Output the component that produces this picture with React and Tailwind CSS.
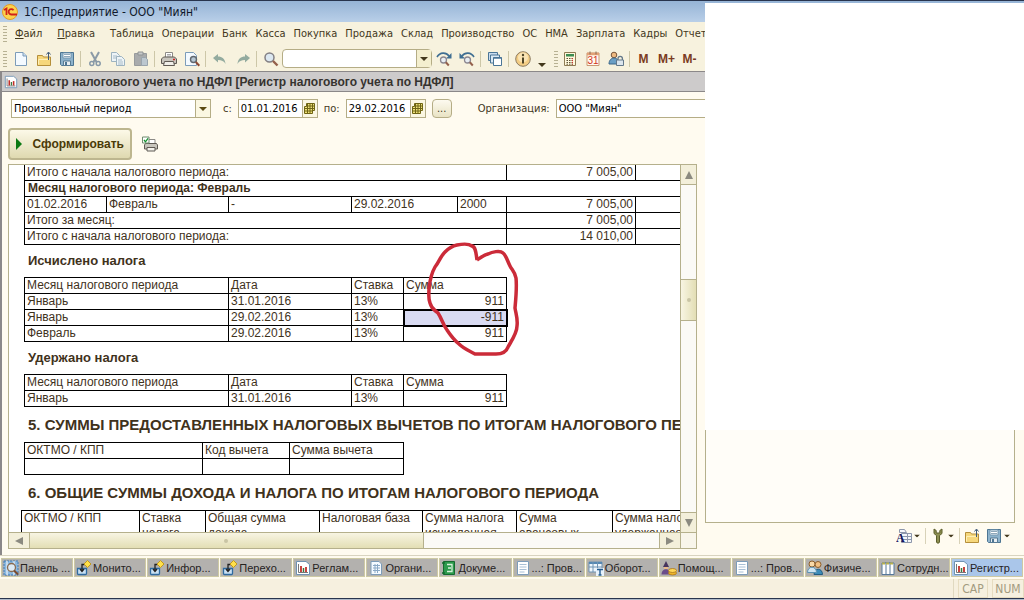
import { useState } from 'react';

const ICONS = {
  blank: (
    <>
      <path d="M2.500 1.500h7.500l3.500 3.500v9.500h-11z" fill="#f4faff" stroke="#7c9cb9" />
      <path d="M10 1.500V5h3.500" fill="#c9dcee" stroke="#7c9cb9" />
    </>
  ),
  open: (
    <>
      <path d="M1.500 4.500h5l1 1.500h7v8.500h-13z" fill="#f6d77c" stroke="#b58f3a" />
      <path d="M2.500 13.500V8.500h11" fill="none" stroke="#fff0b5" />
      <path d="M12.500 9V1.500M10.500 3.500l2-2.500 2 2.500" fill="none" stroke="#3f5a78" />
    </>
  ),
  save: (
    <>
      <path d="M1.500 1.500h13v13h-12l-1-1z" fill="#8eb3cc" stroke="#4d7592" />
      <path d="M4 2h8v5H4z" fill="#fff" stroke="#7397b0" />
      <path d="M5 3.500h6M5 5.500h6" stroke="#8fa8ba" />
      <path d="M4.500 10h7v4.500h-7z" fill="#e7eef3" stroke="#587b94" />
      <path d="M6 11h2v3H6z" fill="#4d7592" />
    </>
  ),
  cut: (
    <>
      <path d="M4 1l5.500 10M12 1L6.500 11" fill="none" stroke="#8b9aa6" strokeWidth="2" />
      <circle cx="4.800" cy="12.500" r="2" fill="none" stroke="#8799a8" strokeWidth="1.500" />
      <circle cx="11.200" cy="12.500" r="2" fill="none" stroke="#8799a8" strokeWidth="1.500" />
    </>
  ),
  copy: (
    <>
      <path d="M1.500 1.500h5l3 3v6h-8z" fill="#eef4f7" stroke="#9db3c0" />
      <path d="M3 5h4M3 7h4" stroke="#a9bcc8" />
      <path d="M6.500 5.500h5l3 3v6h-8z" fill="#eef4f7" stroke="#9db3c0" />
      <path d="M8 9h4M8 11h5M8 13h5" stroke="#a9bcc8" />
    </>
  ),
  paste: (
    <>
      <path d="M1.500 2.500h12v12h-12z" fill="#a9abac" stroke="#989b9c" />
      <path d="M5 1h5v3H5z" fill="#c8caca" stroke="#8f9394" />
      <path d="M8.500 6.500h4l2 2v6h-6z" fill="#bcc7cf" stroke="#9aa5ad" />
    </>
  ),
  print: (
    <>
      <path d="M4.500 1.500h7v5h-7z" fill="#fff" stroke="#8c8a86" />
      <path d="M6 3.500h4M6 5h4" stroke="#aaa" />
      <path d="M2.500 6h11l2 2v4.500H.500V8z" fill="#c8c5bd" stroke="#5f5a54" />
      <path d="M3.500 10.500h9l1 4h-11z" fill="#f0eee8" stroke="#5f5a54" />
      <path d="M12 8.500h2" stroke="#c22" strokeWidth="1.500" />
    </>
  ),
  preview: (
    <>
      <path d="M1.500 1.500h8l3 3v10h-11z" fill="#f4faff" stroke="#7c9cb9" />
      <circle cx="9.500" cy="8.500" r="3" fill="#b5c6d3" stroke="#60676e" strokeWidth="1.400" />
      <path d="M11.800 11l3.500 3.700" stroke="#8d4a33" strokeWidth="2" />
    </>
  ),
  undo: <path d="M1 7l5-4v2.500c4 0 7 2 7.500 7.500C12 10 9.500 9 6 9v2.500z" fill="#93ab9f" />,
  redo: <path d="M15 7l-5-4v2.500c-4 0-7 2-7.500 7.500C4 10 6.500 9 10 9v2.500z" fill="#93ab9f" />,
  find: (
    <>
      <circle cx="6.500" cy="6.500" r="4.500" fill="#dce8f1" stroke="#827f83" strokeWidth="1.500" />
      <path d="M10 10l4.500 4.500" stroke="#94604c" strokeWidth="2.400" />
    </>
  ),
  findNext: (
    <>
      <path d="M1 6c3-5 9-5 12-1" fill="none" stroke="#3f6e92" strokeWidth="1.600" />
      <path d="M15.500 2v5.500H10z" fill="#3f6e92" />
      <circle cx="7.500" cy="9" r="3" fill="#e8eef3" stroke="#8b8790" strokeWidth="1.300" />
      <path d="M9.800 11.300l3 3.200" stroke="#94604c" strokeWidth="2" />
    </>
  ),
  findPrev: (
    <>
      <path d="M15 6c-3-5-9-5-12-1" fill="none" stroke="#3f6e92" strokeWidth="1.600" />
      <path d="M.500 2v5.500H6z" fill="#3f6e92" />
      <circle cx="8.500" cy="9" r="3" fill="#e8eef3" stroke="#8b8790" strokeWidth="1.300" />
      <path d="M10.800 11.300l3 3.200" stroke="#94604c" strokeWidth="2" />
    </>
  ),
  windows: (
    <>
      <path d="M1.500 1.500h9v8h-9z" fill="#c9dcee" stroke="#4a7597" />
      <path d="M3.500 4h9v8h-9z" fill="#dceaf5" stroke="#4a7597" />
      <path d="M6.500 6.500h8v8h-8z" fill="#fff" stroke="#4a7597" />
      <path d="M6.500 7h8" stroke="#4a7597" strokeWidth="1.500" />
    </>
  ),
  info: (
    <>
      <circle cx="8" cy="8" r="7.300" fill="#f3cd84" stroke="#8d7c62" />
      <circle cx="8" cy="6.500" r="5" fill="#fae4b4" />
      <circle cx="8" cy="4" r="1.200" fill="#4f4528" />
      <path d="M8 6.500v6" stroke="#4f4528" strokeWidth="2" />
    </>
  ),
  calc: (
    <>
      <path d="M2.500 1.500h11v13h-11z" fill="#fff8dc" stroke="#8d7b53" />
      <path d="M4 3h8v2.500H4z" fill="#3c8d51" />
      <path d="M4.500 7.500h7M4.500 9.500h7M4.500 11.500h7M4.500 13.200h7" stroke="#5c5235" strokeDasharray="1.500 1" />
      <path d="M10.500 7v6.500" stroke="#c33" strokeDasharray="1.200 .8" />
    </>
  ),
  calendar: (
    <>
      <path d="M2 2h12v12.500H2z" fill="#fffaf0" stroke="#c99874" />
      <path d="M2 3h12" stroke="#e2a177" strokeWidth="2.500" />
      <path d="M5 .5v3M11 .5v3" stroke="#8c6a50" />
      <text x="8" y="13" textAnchor="middle" fontSize="10" fontFamily="Liberation Sans, sans-serif" fill="#d2311c">31</text>
    </>
  ),
  userLock: (
    <>
      <circle cx="6" cy="4" r="2.800" fill="#eeb980" stroke="#775438" />
      <path d="M1 13c0-8 10-8 10 0z" fill="#6b9fc5" stroke="#3c6788" />
      <path d="M10 9V7.500a2.200 2.200 0 0 1 4.400 0V9" fill="none" stroke="#63788a" strokeWidth="1.300" />
      <path d="M8.500 9h7v5.500h-7z" fill="#dce6ee" stroke="#63788a" />
    </>
  ),
  chart: (
    <>
      <path d="M1.500 1.500h9.500l3.500 3v10h-13z" fill="#fff" stroke="#6f93b3" />
      <path d="M3.500 4v8.500H13" fill="none" stroke="#777" />
      <path d="M6 12V6" stroke="#c22f2a" strokeWidth="1.800" />
      <path d="M8.500 12V8" stroke="#3a7a44" strokeWidth="1.500" />
      <path d="M11 12V7" stroke="#c22f2a" strokeWidth="1.800" />
    </>
  ),
  printCheck: (
    <>
      <path d="M6 3.500h7v5H6z" fill="#fff" stroke="#8c8a86" />
      <path d="M3.500 7.500h11l1 1.500v4H2.500V9z" fill="#c8c5bd" stroke="#5f5a54" />
      <path d="M5 11.500h8v3.500H5z" fill="#f4f2ec" stroke="#5f5a54" />
      <path d="M.5 1h6.500v6H.5z" fill="#fff" stroke="#6f8b6f" />
      <path d="M2 4l1.500 1.800L6 2.300" fill="none" stroke="#12912d" strokeWidth="1.300" />
    </>
  ),
  panel: (
    <>
      <path d="M1 1h14v14H1z" fill="#8cb8df" stroke="#3e7bb5" strokeDasharray="2 1" />
      <path d="M4 1v14M11 1v14" stroke="#fff" />
      <circle cx="8.500" cy="7.500" r="4" fill="#dceaf5" stroke="#8a6b50" strokeWidth="1.300" />
      <path d="M11 10.500l4 4" stroke="#7b4c30" strokeWidth="2.200" />
    </>
  ),
  process: (
    <>
      <path d="M1.500 8.500v5q0 1 1 1h7q1 0 1-1v-5z" fill="#c9e0f3" stroke="#2f6ba0" strokeWidth="1.300" />
      <path d="M8.500 4.500H6v6.500M4 9l2 2.500L8 9" fill="none" stroke="#222" strokeWidth="1.300" />
      <path d="M11.500 .5l3.500 3.500-3.500 3.500L8 4z" fill="#ffe04a" stroke="#c2991e" />
    </>
  ),
  grid: (
    <>
      <path d="M3 1.500h8l2.500 2.500v10.500H3z" fill="#f4faff" stroke="#7c9cb9" />
      <path d="M5 5.500h7M5 8h7M5 10.500h7M7 4v9M9.500 4v9" stroke="#8aa9c6" />
    </>
  ),
  doc: (
    <>
      <path d="M2.500 1.500h11v13h-11z" fill="#fff" stroke="#7c9cb9" />
      <path d="M4.500 4.500h7M4.500 7h7M4.500 9.500h7M4.500 12h5" stroke="#a9c0d6" />
    </>
  ),
  book: (
    <>
      <path d="M2.500 1.500h11v13h-11z" fill="#2c9a4d" stroke="#156b30" />
      <path d="M6 4.500h5v7H6M7 8h3" fill="none" stroke="#d7f2dc" strokeWidth="1.300" />
      <path d="M1 3h3M1 13h3" stroke="#156b30" strokeWidth="1.500" />
    </>
  ),
  balance: (
    <>
      <path d="M1 2h13v10H1z" fill="#eef5fb" stroke="#6f93b3" />
      <path d="M1 3h13" stroke="#5688b3" strokeWidth="2" />
      <path d="M1 7h13M5 2v10M9.500 2v10" stroke="#6f93b3" />
      <path d="M8 8h8v8H8z" fill="#e8f2fb" />
      <path d="M9 9.500h6M12 9.500V15M10.500 15h3" stroke="#245d91" strokeWidth="1.400" />
    </>
  ),
  helper: (
    <>
      <path d="M5 1l3 6H2z" fill="#46345e" />
      <path d="M3 7h4v2H3z" fill="#e9b98a" />
      <path d="M.500 14.500c0-7 9-7 9 0z" fill="#6a4c8a" />
      <ellipse cx="11.500" cy="13" rx="4" ry="2" fill="#eeb42a" stroke="#a8761a" strokeWidth=".8" />
      <ellipse cx="11.500" cy="10.500" rx="4" ry="2" fill="#ffd658" stroke="#a8761a" strokeWidth=".8" />
    </>
  ),
  people: (
    <>
      <circle cx="11" cy="4.500" r="3" fill="#f1c083" stroke="#8b5d2b" />
      <circle cx="5" cy="4" r="3" fill="#f8d9a8" stroke="#8b5d2b" />
      <path d="M7 14.500c0-7 8.500-7 8.500 0z" fill="#3d8cb9" stroke="#235d80" />
      <path d="M.5 12.500c0-7 9-7 9 0z" fill="#cfe5f2" stroke="#5c93b3" />
    </>
  ),
  columns: (
    <>
      <path d="M2 3h12v11.500H2z" fill="#fff" stroke="#56799a" />
      <path d="M6 2v12.500M10 2v12.500" stroke="#56799a" />
      <path d="M2 3.500h12" stroke="#b7b04f" strokeWidth="2" strokeDasharray="3 1" />
    </>
  ),
  fontTable: (
    <>
      <path d="M3.500 1.500h5l2 3h-7z" fill="#f4f6fa" stroke="#8d97ab" />
      <path d="M5.500 5.500h10v9h-10z" fill="#f4f6fa" stroke="#8d97ab" />
      <path d="M5.500 8.500h10M5.500 11.500h10M11.500 5.500v9" stroke="#8d97ab" />
      <text x="0" y="14" fontSize="12" fontWeight="bold" fontFamily="Liberation Serif, serif" fill="#12125c">A</text>
    </>
  ),
  wrench: <path d="M4 1v4.500l2.500 2V14c0 1.500 3 1.500 3 0V7.500l2.500-2V1l-2.200 1.500V5H6.200V2.500z" fill="#8e9052" stroke="#5c5e2c" />,
};

const Icon = ({ name, className = 'size-4' }) => (
  <svg viewBox="0 0 16 16" className={`shrink-0 ${className}`} fill="none" aria-hidden="true">
    {ICONS[name]}
  </svg>
);

const Arrow = ({ className = '' }) => (
  <svg viewBox="0 0 8 4" className={`h-1 w-2 shrink-0 ${className}`} aria-hidden="true">
    <path d="M0 0h8L4 4z" fill="currentColor" />
  </svg>
);

const ToolButton = ({ icon, label, disabled }) => (
  <button type="button" aria-label={label} disabled={disabled} className="flex w-[23px] shrink-0 items-center justify-center">
    <Icon name={icon} />
  </button>
);

const Separator = () => <div className="mx-0.5 h-4 w-px shrink-0 bg-[#cdc7a8]" />;

const Grip = () => <div className="h-4 w-1 shrink-0 bg-[repeating-linear-gradient(#b7b193_0_1px,transparent_1px_3px)]" />;

const MENU = [
  { label: 'Файл', hotkey: true },
  { label: 'Правка', hotkey: true },
  { label: 'Таблица' },
  { label: 'Операции' },
  { label: 'Банк' },
  { label: 'Касса' },
  { label: 'Покупка' },
  { label: 'Продажа' },
  { label: 'Склад' },
  { label: 'Производство' },
  { label: 'ОС' },
  { label: 'НМА' },
  { label: 'Зарплата' },
  { label: 'Кадры' },
  { label: 'Отчеты' },
];

const TASKS = [
  { icon: 'panel', label: 'Панель ...' },
  { icon: 'process', label: 'Монито...' },
  { icon: 'process', label: 'Инфор...' },
  { icon: 'process', label: 'Перехо...' },
  { icon: 'chart', label: 'Реглам...' },
  { icon: 'grid', label: 'Органи...' },
  { icon: 'book', label: 'Докуме...' },
  { icon: 'doc', label: '...: Пров...' },
  { icon: 'balance', label: 'Оборот...' },
  { icon: 'helper', label: 'Помощ...' },
  { icon: 'doc', label: '...: Пров...' },
  { icon: 'people', label: 'Физиче...' },
  { icon: 'columns', label: 'Сотрудн...' },
  { icon: 'chart', label: 'Регистр...' },
];

const TitleBar = () => (
  <header className="flex h-[22px] shrink-0 items-center gap-1.5 border-t border-[#28344d] bg-linear-to-b from-[#96b4d6] to-[#b9cfe8] pl-0.5">
    <svg viewBox="0 0 16 16" className="size-4" aria-hidden="true">
      <circle cx="8" cy="8" r="7.500" fill="#fbd24c" stroke="#e39a2b" />
      <path d="M2 6l2.500-1.500V11" fill="none" stroke="#d0201b" strokeWidth="1.800" />
      <path d="M11.500 6.200A2.700 2.700 0 1 0 9.500 10.500H15" fill="none" stroke="#d0201b" strokeWidth="1.800" />
    </svg>
    <h1 className="text-xs text-[#10182a]">1С:Предприятие - ООО "Миян"</h1>
  </header>
);

const MenuBar = () => (
  <nav className="flex h-6 shrink-0 items-center gap-2 overflow-hidden pl-[3px]">
    <Grip />
    {MENU.map(({ label, hotkey }) => (
      <button key={label} type="button" className={hotkey ? 'mr-[7px]' : ''}>
        {hotkey ? <><u>{label[0]}</u>{label.slice(1)}</> : label}
      </button>
    ))}
  </nav>
);

const ToolBar = () => {
  const [query, setQuery] = useState('');

  return (
    <div className="flex h-[25px] shrink-0 items-center overflow-hidden pl-[3px]">
      <Grip />
      <div className="ml-0.5 flex">
        <ToolButton icon="blank" label="Новый" />
        <ToolButton icon="open" label="Открыть" />
        <ToolButton icon="save" label="Сохранить" />
      </div>
      <Separator />
      <ToolButton icon="cut" label="Вырезать" disabled />
      <ToolButton icon="copy" label="Копировать" disabled />
      <ToolButton icon="paste" label="Вставить" disabled />
      <Separator />
      <ToolButton icon="print" label="Печать" />
      <ToolButton icon="preview" label="Просмотр" />
      <Separator />
      <ToolButton icon="undo" label="Отменить" disabled />
      <ToolButton icon="redo" label="Вернуть" disabled />
      <Separator />
      <ToolButton icon="find" label="Найти" />
      <div className="flex h-[19px] w-[150px] shrink-0 rounded-sm border border-[#b5ad86] bg-white">
        <input
          aria-label="Поиск"
          value={query}
          onChange={(e) => setQuery(e.target.value)}
          className="min-w-0 flex-1 px-1 outline-none"
        />
        <button type="button" aria-label="История поиска" className="flex w-[15px] items-center justify-center border-l border-[#b5ad86] bg-[#f4efcf]">
          <Arrow />
        </button>
      </div>
      <ToolButton icon="findNext" label="Найти следующий" />
      <ToolButton icon="findPrev" label="Найти предыдущий" />
      <Separator />
      <ToolButton icon="windows" label="Окна" />
      <Separator />
      <ToolButton icon="info" label="Справка" />
      <Arrow className="mx-1 mt-3" />
      <div className="ml-1"><Grip /></div>
      <ToolButton icon="calc" label="Калькулятор" />
      <ToolButton icon="calendar" label="Календарь" />
      <ToolButton icon="userLock" label="Пользователь" />
      <Separator />
      {['M', 'M+', 'M-'].map((key) => (
        <button key={key} type="button" className="w-[23px] shrink-0 font-['Liberation_Sans',sans-serif] text-xs font-bold text-[#7a3b22]">
          {key}
        </button>
      ))}
    </div>
  );
};

const DateField = ({ id, label, value, onChange }) => (
  <>
    <label htmlFor={id}>{label}</label>
    <div className="flex h-[19px] w-20 shrink-0 border border-[#b5ad86] bg-white text-black">
      <input id={id} value={value} onChange={(e) => onChange(e.target.value)} className="min-w-0 flex-1 pl-0.5 outline-none" />
      <button type="button" aria-label="Выбрать дату" className="flex w-[15px] items-center justify-center border-l border-[#b5ad86] bg-[#fbf7e2]">
        <svg viewBox="0 0 11 11" className="size-[11px]" aria-hidden="true">
          <path d="M2.500 .5h8v7h-2v3h-8v-7h2z" fill="#f0e37a" stroke="#6f6414" />
          <path d="M.5 5.500h10M.5 8h8M3.500 .5v10M6 .5v10M8.500 .5v8M2.500 3h8" stroke="#6f6414" />
        </svg>
      </button>
    </div>
  </>
);

const Filters = () => {
  const [from, setFrom] = useState('01.01.2016');
  const [to, setTo] = useState('29.02.2016');
  const [org, setOrg] = useState('ООО "Миян"');

  return (
    <form className="shrink-0 pl-1.5">
      <div className="flex items-center gap-1.5 pl-[3px]">
        <div className="relative mr-1.5 h-[19px] w-[200px] shrink-0">
          <select aria-label="Период" className="size-full appearance-none border border-[#b5ad86] bg-white pl-0.5 text-black outline-none">
            <option>Произвольный период</option>
            <option>Месяц</option>
            <option>Квартал</option>
          </select>
          <span className="pointer-events-none absolute inset-y-px right-px flex w-[15px] items-center justify-center border-l border-[#b5ad86] bg-[#fbf7e2]">
            <Arrow className="text-[#5b4a12]" />
          </span>
        </div>
        <DateField id="date-from" label="с:" value={from} onChange={setFrom} />
        <DateField id="date-to" label="по:" value={to} onChange={setTo} />
        <button type="button" aria-label="Выбрать период" className="h-[19px] w-5 shrink-0 rounded-sm border border-[#b5ad86] bg-linear-to-b from-[#fdfaf0] to-[#e9e3c4]">
          ...
        </button>
        <label htmlFor="org" className="ml-5">Организация:</label>
        <input
          id="org"
          value={org}
          onChange={(e) => setOrg(e.target.value)}
          className="h-[19px] min-w-0 flex-1 border border-[#b5ad86] bg-white pl-0.5 text-black outline-none"
        />
      </div>
      <div className="flex items-center gap-2.5 pt-[10px]">
        <button
          type="button"
          className="flex h-8 w-[124px] items-center justify-between rounded-sm border-2 border-[#bdb68f] bg-linear-to-b from-[#fcf9e8] to-[#dfd9b0] pr-1.5 pl-1.5 text-[#4a3a08]"
        >
          <svg viewBox="0 0 6 12" className="h-3 w-1.5" aria-hidden="true">
            <path d="M0 0l6 6-6 6z" fill="#0b7a12" />
          </svg>
          <span className="font-['Liberation_Sans',sans-serif] text-xs font-bold">Сформировать</span>
        </button>
        <button type="button" aria-label="Настройка печати"><Icon name="printCheck" /></button>
      </div>
    </form>
  );
};

const TAX_COLUMNS = ['Месяц налогового периода', 'Дата', 'Ставка', 'Сумма'];

const Cell = ({ as: Tag = 'td', className = '', ...props }) => (
  <Tag className={`overflow-hidden border border-black px-0.5 py-0 text-left font-normal whitespace-nowrap ${className}`} {...props} />
);

const TaxTable = ({ rows, selected }) => (
  <table className="w-[482px] table-fixed border-collapse">
    <colgroup>
      <col className="w-[204px]" />
      <col className="w-[123px]" />
      <col className="w-[52px]" />
      <col className="w-[103px]" />
    </colgroup>
    <thead>
      <tr>{TAX_COLUMNS.map((title) => <Cell as="th" key={title}>{title}</Cell>)}</tr>
    </thead>
    <tbody>
      {rows.map(([month, date, rate, sum], i) => (
        <tr key={i}>
          <Cell>{month}</Cell>
          <Cell>{date}</Cell>
          <Cell>{rate}</Cell>
          <Cell className={i === selected ? 'bg-[#d9dbf2] text-right outline-2 -outline-offset-1 outline-black' : 'text-right'}>{sum}</Cell>
        </tr>
      ))}
    </tbody>
  </table>
);

const IncomeTable = () => (
  <table className="-mt-px w-[800px] table-fixed border-collapse">
    <colgroup>
      <col className="w-[82px]" />
      <col className="w-[122px]" />
      <col className="w-[123px]" />
      <col className="w-[106px]" />
      <col className="w-[49px]" />
      <col className="w-[129px]" />
      <col />
    </colgroup>
    <tbody>
      <tr>
        <Cell colSpan={5}>Итого с начала налогового периода:</Cell>
        <Cell className="text-right">7 005,00</Cell>
        <Cell />
      </tr>
      <tr>
        <Cell colSpan={7}><b className="pl-px">Месяц налогового периода: Февраль</b></Cell>
      </tr>
      <tr>
        <Cell>01.02.2016</Cell>
        <Cell>Февраль</Cell>
        <Cell>-</Cell>
        <Cell>29.02.2016</Cell>
        <Cell>2000</Cell>
        <Cell className="text-right">7 005,00</Cell>
        <Cell />
      </tr>
      <tr>
        <Cell colSpan={5}>Итого за месяц:</Cell>
        <Cell className="text-right">7 005,00</Cell>
        <Cell />
      </tr>
      <tr>
        <Cell colSpan={5}>Итого с начала налогового периода:</Cell>
        <Cell className="text-right">14 010,00</Cell>
        <Cell />
      </tr>
    </tbody>
  </table>
);

const DeductionTable = () => (
  <table className="w-[379px] table-fixed border-collapse">
    <colgroup>
      <col className="w-[178px]" />
      <col className="w-[87px]" />
      <col className="w-[114px]" />
    </colgroup>
    <thead>
      <tr>
        <Cell as="th">ОКТМО / КПП</Cell>
        <Cell as="th">Код вычета</Cell>
        <Cell as="th">Сумма вычета</Cell>
      </tr>
    </thead>
    <tbody>
      <tr className="h-4"><Cell /><Cell /><Cell /></tr>
    </tbody>
  </table>
);

const TotalsTable = () => (
  <table className="-ml-[3px] w-[720px] table-fixed border-collapse">
    <colgroup>
      <col className="w-[118px]" />
      <col className="w-[66px]" />
      <col className="w-[114px]" />
      <col className="w-[103px]" />
      <col className="w-[94px]" />
      <col className="w-[96px]" />
      <col />
    </colgroup>
    <thead>
      <tr className="align-top">
        <Cell as="th">ОКТМО / КПП</Cell>
        <Cell as="th">Ставка<br />налога</Cell>
        <Cell as="th">Общая сумма<br />дохода</Cell>
        <Cell as="th">Налоговая база</Cell>
        <Cell as="th">Сумма налога<br />исчисленная</Cell>
        <Cell as="th">Сумма<br />авансовых</Cell>
        <Cell as="th">Сумма налога<br />удержанная</Cell>
      </tr>
    </thead>
  </table>
);

const ScrollButton = ({ d, label, className }) => (
  <button type="button" aria-label={label} className={`flex shrink-0 items-center justify-center border-[#b5b08c] bg-[#f3efda] ${className}`}>
    <svg viewBox="0 0 8 8" className="size-2" aria-hidden="true">
      <path d={d} fill="#8b8a80" />
    </svg>
  </button>
);

const Sheet = () => (
  <section className="grid min-w-0 flex-1 grid-cols-[minmax(0,1fr)_16px] grid-rows-[minmax(0,1fr)_16px] border border-[#b5b08c] bg-white">
    <div className="relative overflow-hidden pl-[15px] font-['Liberation_Sans',Arial,sans-serif] text-xs leading-[15px] text-[#3f321c]">
      <IncomeTable />
      <h3 className="pt-2 pb-[9px] pl-1 text-[13px] leading-[15px] font-bold">Исчислено налога</h3>
      <TaxTable
        selected={1}
        rows={[
          ['Январь', '31.01.2016', '13%', '911'],
          ['Январь', '29.02.2016', '13%', '-911'],
          ['Февраль', '29.02.2016', '13%', '911'],
        ]}
      />
      <h3 className="pt-2 pb-[9px] pl-1 text-[13px] leading-[15px] font-bold">Удержано налога</h3>
      <TaxTable rows={[['Январь', '31.01.2016', '13%', '911']]} />
      <h2 className="py-2 pl-1 text-[15px] leading-[19px] font-bold whitespace-nowrap">
        5. СУММЫ ПРЕДОСТАВЛЕННЫХ НАЛОГОВЫХ ВЫЧЕТОВ ПО ИТОГАМ НАЛОГОВОГО ПЕРИОДА
      </h2>
      <DeductionTable />
      <h2 className="py-2 pl-1 text-[15px] leading-[19px] font-bold whitespace-nowrap">
        6. ОБЩИЕ СУММЫ ДОХОДА И НАЛОГА ПО ИТОГАМ НАЛОГОВОГО ПЕРИОДА
      </h2>
      <TotalsTable />

      {/* Red pen mark around the sums */}
      <svg viewBox="0 0 94 116" className="pointer-events-none absolute top-[77px] left-[417px] h-[116px] w-[94px]" aria-hidden="true">
        <path
          d="M51 18C50 12 50 5 46 4C42 1 36 2 31 3C26 4 22 7 19 10C14 15 13 20 9 25C5 32 4 38 3 46C3 52 2 56 4 61C6 68 9 68 12 71C16 77 17 83 21 88C25 94 28 98 33 102C38 107 44 109 49 112H70C75 112 80 111 82 105C86 98 91 91 91 84C92 77 90 72 89 66C90 55 91 45 90 36C89 30 86 28 84 24C81 18 80 13 77 11C74 8 66 10 62 12C58 13 54 16 51 18"
          fill="none"
          stroke="#cb2b39"
          strokeWidth="3.500"
          strokeLinejoin="round"
        />
      </svg>
    </div>

    {/* Vertical scrollbar */}
    <div className="flex flex-col border-l border-[#b5b08c] bg-[#fbfaf6]">
      <ScrollButton label="Вверх" d="M4 0l4 8H0z" className="h-5 border-b" />
      <div className="flex-[93]" />
      <div className="flex h-[42px] items-center justify-center border-y border-[#b5b08c] bg-linear-to-r from-[#f8f5e3] to-[#e3deb4]">
        <span className="size-1 rounded-full bg-[#c9c5a5]" />
      </div>
      <div className="flex-[190]" />
      <ScrollButton label="Вниз" d="M4 8L0 0h8z" className="h-5 border-t" />
    </div>

    {/* Horizontal scrollbar */}
    <div className="flex border-t border-[#b5b08c] bg-[#fbfaf6]">
      <ScrollButton label="Влево" d="M0 4l8-4v8z" className="w-[21px] border-r" />
      <div className="flex flex-[394] items-center justify-center border-r border-[#b5b08c] bg-linear-to-b from-[#f8f5e3] to-[#e3deb4]">
        <span className="size-1 rounded-full bg-[#c9c5a5]" />
      </div>
      <div className="flex-[236]" />
      <ScrollButton label="Вправо" d="M8 4L0 0v8z" className="w-[21px] border-l" />
    </div>
    <div className="border-t border-l border-[#b5b08c] bg-[#f8f5ea]" />
  </section>
);

const SidePanel = () => (
  <aside className="flex w-[310px] shrink-0 flex-col">
    <div className="flex-1 border border-[#b5b08c] bg-[#fffdf8]" />
    <div className="flex h-[26px] items-center justify-end pr-1">
      <button type="button" aria-label="Шрифт" className="flex items-center gap-px"><Icon name="fontTable" /><Arrow className="scale-75" /></button>
      <div className="mx-1 h-4 w-px bg-[#d8d2b8]" />
      <button type="button" aria-label="Настройка" className="flex items-center gap-px"><Icon name="wrench" /><Arrow className="scale-75" /></button>
      <div className="mx-1 h-4 w-px bg-[#d8d2b8]" />
      <button type="button" aria-label="Открыть файл"><Icon name="open" /></button>
      <button type="button" aria-label="Сохранить файл" className="ml-1.5 flex items-center gap-px"><Icon name="save" /><Arrow className="scale-75" /></button>
    </div>
  </aside>
);

const TaskBar = () => {
  const [active, setActive] = useState(TASKS.length - 1);

  return (
    <nav className="flex h-6 shrink-0 gap-px border-t border-[#d9d4c0] bg-[#fffbf0] px-px py-0.5 font-['Liberation_Sans',Arial,sans-serif]">
      {TASKS.map(({ icon, label }, i) => (
        <button
          key={i}
          type="button"
          onClick={() => setActive(i)}
          className={`flex min-w-0 flex-1 items-center gap-px overflow-hidden border border-[#cdc9a4] pl-px whitespace-nowrap text-[#26231f] ${i === active ? 'bg-[#aac6ea]' : 'bg-[#b3b1ae]'}`}
        >
          <Icon name={icon} />
          {label}
        </button>
      ))}
    </nav>
  );
};

const App = () => (
  <div className="relative flex h-screen flex-col overflow-hidden bg-[#f7f2de] font-['DejaVu_Sans_Condensed','Liberation_Sans',sans-serif] text-[11px] leading-[14px] text-[#43381c]">
    <TitleBar />
    <MenuBar />
    <ToolBar />

    <main className="flex min-h-0 flex-1 flex-col border-l-2 border-[#8b8889] bg-[#fffbf0]">
      <div className="flex h-[21px] shrink-0 items-center gap-1 border-y border-[#8b8889] bg-[#cdcbcb] pl-0.5">
        <Icon name="chart" className="size-[14px]" />
        <h2 className="font-['Liberation_Sans',sans-serif] text-xs font-bold whitespace-nowrap text-[#36332f]">
          Регистр налогового учета по НДФЛ [Регистр налогового учета по НДФЛ]
        </h2>
      </div>
      <div className="pt-[7px] pb-1">
        <Filters />
      </div>
      <div className="flex min-h-0 flex-1 gap-2 pr-[9px] pb-1.5 pl-1.5">
        <Sheet />
        <SidePanel />
      </div>
    </main>

    <TaskBar />

    <footer className="flex h-[19px] shrink-0 justify-end gap-1 bg-[#f6f0df] text-xs text-[#a39b80]">
      <div className="flex-1 border-r border-[#e0d9c0]" />
      <span className="flex w-[30px] items-center justify-center border border-[#e6dcc0]">CAP</span>
      <span className="flex w-8 items-center justify-center border border-[#e6dcc0]">NUM</span>
    </footer>
    <div className="h-0.5 shrink-0 border-t border-[#28344d] bg-[#aeb9c8]" />

    {/* Blanked out part of the window */}
    <div className="absolute top-[3px] right-0 h-[427px] w-[319px] bg-white" />
  </div>
);

export default App;
